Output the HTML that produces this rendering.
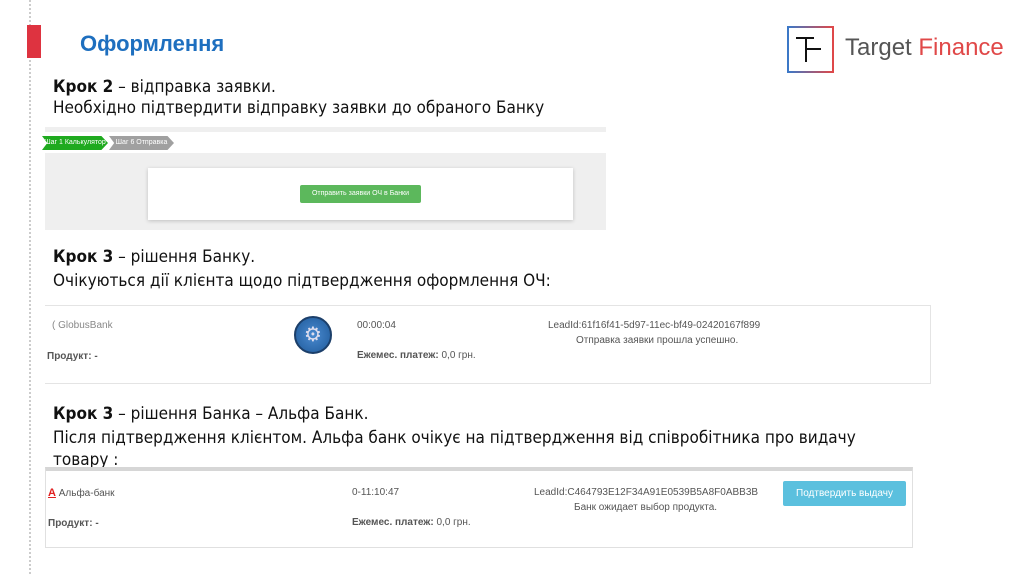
<!DOCTYPE html>
<html><head><meta charset="utf-8"><style>
body{margin:0;width:1024px;height:574px;background:#fff;position:relative;overflow:hidden;font-family:"Liberation Sans","DejaVu Sans",sans-serif;}
.a{position:absolute;white-space:nowrap}
.t{font-size:17px;color:#111;font-family:"DejaVu Sans Condensed","Liberation Sans",sans-serif;}
.s{font-size:10px;color:#555;font-family:"Liberation Sans Narrow","Liberation Sans",sans-serif}
.st{position:absolute;top:136px;height:14px;font-size:7px;color:#fff;line-height:14px;text-align:center}
</style></head><body>
<div class="a" style="left:29px;top:0;height:574px;border-left:2px dotted #ccc"></div>
<div class="a" style="left:27px;top:25px;width:14px;height:33px;background:#de3340"></div>
<div class="a" style="left:80px;top:31px;font-size:22px;font-weight:bold;color:#1e6fbf">Оформлення</div>

<!-- logo -->
<div class="a" style="left:787px;top:26px;width:43px;height:43px;border:2px solid;border-image:linear-gradient(90deg,#3a78c8,#e04848) 1"></div>
<div class="a" style="left:796px;top:37px;width:18px;height:2px;background:#111"></div>
<div class="a" style="left:805px;top:37px;width:2px;height:25px;background:#111"></div>
<div class="a" style="left:807px;top:48px;width:14px;height:2px;background:#111"></div>
<div class="a" style="left:845px;top:34px;font-size:24px;color:#555">Target <span style="color:#e04848">Finance</span></div>

<div class="a t" style="left:53px;top:77px"><b>Крок 2</b> – відправка заявки.</div>
<div class="a t" style="left:53px;top:98px">Необхідно підтвердити відправку заявки до обраного Банку</div>

<div class="a" style="left:45px;top:127px;width:561px;height:103px;background:#efefef"></div>
<div class="a" style="left:45px;top:132px;width:561px;height:21px;background:#fff"></div>
<div class="st" style="left:109px;width:65px;background:#a0a0a0;clip-path:polygon(0 0,90% 0,100% 50%,90% 100%,0 100%,8% 50%)">Шаг 6 Отправка</div>
<div class="st" style="left:42px;width:66px;background:#1faa1f;clip-path:polygon(0 0,90% 0,100% 50%,90% 100%,0 100%,8% 50%)">Шаг 1 Калькулятор</div>
<div class="a" style="left:148px;top:168px;width:425px;height:52px;background:#fff;box-shadow:0 1px 4px rgba(0,0,0,.2)"></div>
<div class="a" style="left:300px;top:185px;width:121px;height:18px;background:#5cb85c;border-radius:2px;color:#fff;font-size:7px;text-align:center;line-height:18px">Отправить заявки ОЧ в Банки</div>

<div class="a t" style="left:53px;top:247px"><b>Крок 3</b> – рішення Банку.</div>
<div class="a t" style="left:53px;top:271px">Очікуються дії клієнта щодо підтвердження оформлення ОЧ:</div>

<div class="a" style="left:45px;top:305px;width:885px;height:77px;border:1px solid #e4e4e4;border-left:none"></div>
<div class="a s" style="left:52px;top:320px;color:#888">( GlobusBank</div>
<div class="a s" style="left:47px;top:351px;font-weight:bold">Продукт: -</div>
<div class="a" style="left:294px;top:316px;width:38px;height:38px;border-radius:50%;background:radial-gradient(#4a8ad0,#1f5a9a);border:2px solid #1c3f6a;box-sizing:border-box;color:#dde;font-size:20px;text-align:center;line-height:34px">⚙</div>
<div class="a s" style="left:357px;top:320px">00:00:04</div>
<div class="a s" style="left:357px;top:350px;font-weight:bold">Ежемес. платеж: <span style="font-weight:normal">0,0 грн.</span></div>
<div class="a s" style="left:548px;top:320px">LeadId:61f16f41-5d97-11ec-bf49-02420167f899</div>
<div class="a s" style="left:576px;top:335px">Отправка заявки прошла успешно.</div>

<div class="a t" style="left:53px;top:404px"><b>Крок 3</b> – рішення Банка – Альфа Банк.</div>
<div class="a t" style="left:53px;top:428px">Після підтвердження клієнтом. Альфа банк очікує на підтвердження від співробітника про видачу</div>
<div class="a t" style="left:53px;top:450px">товару :</div>

<div class="a" style="left:45px;top:467px;width:868px;height:81px;border:1px solid #e0e0e0;border-top:4px solid #d6d6d6;box-sizing:border-box"></div>
<div class="a s" style="left:48px;top:487px"><span style="color:#e02020;font-weight:bold;font-size:11px;text-decoration:underline">A</span> Альфа-банк</div>
<div class="a s" style="left:48px;top:518px;font-weight:bold">Продукт: -</div>
<div class="a s" style="left:352px;top:487px">0-11:10:47</div>
<div class="a s" style="left:352px;top:517px;font-weight:bold">Ежемес. платеж: <span style="font-weight:normal">0,0 грн.</span></div>
<div class="a s" style="left:534px;top:487px">LeadId:C464793E12F34A91E0539B5A8F0ABB3B</div>
<div class="a s" style="left:574px;top:502px">Банк ожидает выбор продукта.</div>
<div class="a" style="left:783px;top:481px;width:123px;height:25px;background:#5bc0de;border-radius:2px;color:#fff;font-size:10px;text-align:center;line-height:25px">Подтвердить выдачу</div>
</body></html>
